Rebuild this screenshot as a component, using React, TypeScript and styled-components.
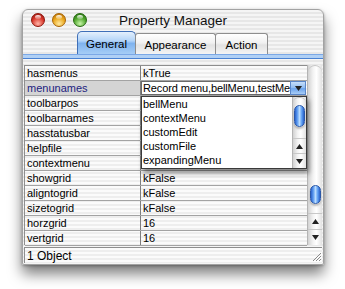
import styled, { createGlobalStyle } from 'styled-components';

const GlobalStyle = createGlobalStyle`
  body {
    margin: 0;
    background: #ffffff;
  }
`;

const pinstripe =
  'repeating-linear-gradient(to bottom, #f5f5f5 0px, #f5f5f5 2px, #e7e7e7 2px, #e7e7e7 4px)';
const lightStripe =
  'repeating-linear-gradient(to bottom, #fbfbfb 0px, #fbfbfb 2px, #eeeeee 2px, #eeeeee 4px)';

const rows = [
  { id: 1, name: 'hasmenus', value: 'kTrue' },
  { id: 2, name: 'menunames', value: '', popup: true },
  { id: 3, name: 'toolbarpos', value: '' },
  { id: 4, name: 'toolbarnames', value: '' },
  { id: 5, name: 'hasstatusbar', value: '' },
  { id: 6, name: 'helpfile', value: '' },
  { id: 7, name: 'contextmenu', value: '' },
  { id: 8, name: 'showgrid', value: 'kFalse' },
  { id: 9, name: 'aligntogrid', value: 'kFalse' },
  { id: 10, name: 'sizetogrid', value: 'kFalse' },
  { id: 11, name: 'horzgrid', value: '16' },
  { id: 12, name: 'vertgrid', value: '16' }
];

const menuItems = ['bellMenu', 'contextMenu', 'customEdit', 'customFile', 'expandingMenu'];

const tabs = [
  { id: 1, name: 'General', width: 59, active: true },
  { id: 2, name: 'Appearance', width: 81 },
  { id: 3, name: 'Action', width: 53 }
];

const lights = [
  { id: 1, base: '#d8362a', light: '#ffb3a6', dark: '#8e140b' },
  { id: 2, base: '#e9a51a', light: '#ffe9a0', dark: '#a86405' },
  { id: 3, base: '#4ea52c', light: '#c8f5a8', dark: '#24680f' }
];

const Arrow = ({ up }: { up?: boolean }) => (
  <svg width='7' height='5' viewBox='0 0 7 5'>
    <polygon points={up ? '3.5,0 7,5 0,5' : '0,0 7,0 3.5,5'} fill='#222' />
  </svg>
);

const Grip = () => (
  <svg width='12' height='12' viewBox='0 0 12 12'>
    <path d='M11 3 L3 11 M11 6 L6 11 M11 9 L9 11' stroke='#8a8a8a' strokeWidth='1' />
    <path d='M12 4 L4 12 M12 7 L7 12 M12 10 L10 12' stroke='#ffffff' strokeWidth='1' />
  </svg>
);

export default function App() {
  return (
    <Page>
      <GlobalStyle />
      <Window>
        <TitleBar>
          <Lights>
            {lights.map((l) => (
              <Light key={l.id} $base={l.base} $light={l.light} $dark={l.dark} />
            ))}
          </Lights>
          <Title>Property Manager</Title>
          <span />
        </TitleBar>
        <TabRow>
          {tabs.map((t) => (
            <Tab key={t.id} $active={t.active} $width={t.width}>
              {t.name}
            </Tab>
          ))}
        </TabRow>
        <Band />
        <Content>
          <Table>
            {rows.map((r) => (
              <Row key={r.id}>
                <NameCell $selected={r.popup}>{r.name}</NameCell>
                <ValueCell>
                  {r.popup ? (
                    <>
                      <Field>Record menu,bellMenu,testMe</Field>
                      <PopupButton>
                        <Arrow />
                      </PopupButton>
                      <MenuList>
                        <MenuItems>
                          {menuItems.map((m) => (
                            <MenuItem key={m}>{m}</MenuItem>
                          ))}
                        </MenuItems>
                        <ScrollBar $small>
                          <Track $small>
                            <Thumb $offset={7} $height={22} />
                          </Track>
                          <ArrowButton $small>
                            <Arrow up />
                          </ArrowButton>
                          <ArrowButton $small>
                            <Arrow />
                          </ArrowButton>
                        </ScrollBar>
                      </MenuList>
                    </>
                  ) : (
                    r.value
                  )}
                </ValueCell>
              </Row>
            ))}
          </Table>
          <ScrollBar>
            <Track>
              <Thumb $offset={119} $height={19} />
            </Track>
            <ArrowButton>
              <Arrow up />
            </ArrowButton>
            <ArrowButton>
              <Arrow />
            </ArrowButton>
          </ScrollBar>
        </Content>
        <StatusBar>
          <span>1 Object</span>
          <Grip />
        </StatusBar>
      </Window>
    </Page>
  );
}

const Page = styled.div`
  padding: 9px 0 0 22px;
  height: 289px;
  box-sizing: border-box;
`;

const Window = styled.div`
  width: 302px;
  height: 256px;
  box-sizing: border-box;
  display: flex;
  flex-direction: column;
  background: ${pinstripe};
  border: 1px solid #a2a2a2;
  border-radius: 6px 6px 2px 2px;
  box-shadow: 0 9px 14px rgba(0, 0, 0, 0.5), 0 1px 3px rgba(0, 0, 0, 0.3);
  font-family: 'Liberation Sans', Arial, sans-serif;
  color: #000;
`;

const TitleBar = styled.div`
  height: 21px;
  display: grid;
  grid-template-columns: 1fr auto 1fr;
  align-items: center;
  box-sizing: border-box;
`;

const Lights = styled.div`
  display: flex;
  gap: 7px;
  padding-left: 8px;
  padding-bottom: 1px;
`;

const Light = styled.div<{ $base: string; $light: string; $dark: string }>`
  position: relative;
  width: 14px;
  height: 14px;
  border-radius: 50%;
  box-sizing: border-box;
  border: 1px solid ${(p) => p.$dark};
  background: radial-gradient(circle at 50% 80%, ${(p) => p.$light} 0%, ${(p) => p.$base} 55%, ${(p) => p.$dark} 100%);

  &::after {
    content: '';
    position: absolute;
    left: 3px;
    top: 1px;
    width: 6px;
    height: 4px;
    border-radius: 50%;
    background: linear-gradient(to bottom, rgba(255, 255, 255, 0.95), rgba(255, 255, 255, 0.2));
  }
`;

const Title = styled.div`
  font-size: 13.5px;
  color: #111;
`;

const TabRow = styled.div`
  height: 23px;
  display: flex;
  align-items: flex-end;
  padding-left: 54px;
`;

const Tab = styled.div<{ $active?: boolean; $width: number }>`
  width: ${(p) => p.$width}px;
  height: ${(p) => (p.$active ? 23 : 21)}px;
  box-sizing: border-box;
  display: flex;
  align-items: center;
  justify-content: center;
  font-size: 11.5px;
  padding-top: 1px;
  border: 1px solid ${(p) => (p.$active ? '#3f6fb8' : '#8e8e8e')};
  border-bottom: none;
  border-radius: ${(p) => (p.$active ? '5px 5px 0 0' : '3px 3px 0 0')};
  margin-left: ${(p) => (p.$active ? 0 : -1)}px;
  background: ${(p) =>
    p.$active
      ? 'linear-gradient(to bottom, #e4f0fd 0%, #b3d4f8 40%, #7fb3ef 52%, #a6cdf6 100%)'
      : 'linear-gradient(to bottom, #ffffff 0%, #f1f1f1 45%, #e2e2e2 55%, #f4f4f4 100%)'};
`;

const Band = styled.div`
  height: 5px;
  box-sizing: border-box;
  border-top: 1px solid #7ba8e6;
  border-bottom: 1px solid #4a82d2;
  background: #b0d0f5;
`;

const Content = styled.div`
  display: flex;
  padding: 6px 1px 0 1px;
  height: 186px;
  box-sizing: border-box;
`;

const Table = styled.div`
  width: 283px;
  height: 180px;
  box-sizing: border-box;
  border-top: 1px solid #8e8e8e;
  border-left: 1px solid #8e8e8e;
  background: ${lightStripe};
  font-size: 11px;
`;

const Row = styled.div`
  display: grid;
  grid-template-columns: 116px 1fr;
  height: 15px;
  box-sizing: border-box;
  border-bottom: 1px solid #a3a3a3;
`;

const NameCell = styled.div<{ $selected?: boolean }>`
  padding-left: 2px;
  line-height: 14px;
  border-right: 1px solid #7e7e7e;
  background: ${(p) => (p.$selected ? '#d4d4d4' : 'transparent')};
  color: ${(p) => (p.$selected ? '#1d1d80' : '#000')};
  white-space: nowrap;
  overflow: hidden;
`;

const ValueCell = styled.div`
  position: relative;
  display: flex;
  padding-left: 2px;
  line-height: 14px;
  white-space: nowrap;
`;

const Field = styled.div`
  margin-left: -2px;
  width: 149px;
  height: 14px;
  box-sizing: border-box;
  padding-left: 1px;
  line-height: 13px;
  letter-spacing: -0.1px;
  background: #fff;
  border: 1px solid #6a6a6a;
  border-right: none;
  overflow: hidden;
`;

const PopupButton = styled.div`
  width: 16px;
  height: 14px;
  box-sizing: border-box;
  display: flex;
  align-items: center;
  justify-content: center;
  border: 1px solid #5a86c8;
  background: linear-gradient(to bottom, #c6def9 0%, #8ebbf1 50%, #6aa3ec 55%, #a9cdf6 100%);
`;

const MenuList = styled.div`
  position: absolute;
  left: 0;
  top: 15px;
  z-index: 2;
  width: 166px;
  height: 73px;
  box-sizing: border-box;
  display: flex;
  background: #fff;
  border: 1px solid #3a3a3a;
  box-shadow: 2px 4px 5px rgba(0, 0, 0, 0.45);
`;

const MenuItems = styled.div`
  flex: 1;
  overflow: hidden;
  padding-left: 1px;
`;

const MenuItem = styled.div`
  height: 14px;
  line-height: 14px;
  color: #000;
`;

const ScrollBar = styled.div<{ $small?: boolean }>`
  width: ${(p) => (p.$small ? 14 : 15)}px;
  height: ${(p) => (p.$small ? 71 : 180)}px;
  display: flex;
  flex-direction: column;
  box-sizing: border-box;
  border-left: 1px solid #b4b4b4;
  background: linear-gradient(to right, #d2d2d2 0%, #f2f2f2 35%, #ffffff 60%, #e2e2e2 100%);
`;

const Track = styled.div<{ $small?: boolean }>`
  flex: 1;
  display: flex;
  flex-direction: column;
  align-items: center;
  border-radius: ${(p) => (p.$small ? '6px 6px 0 0' : '7px 7px 0 0')};
  border-top: 1px solid #c4c4c4;
`;

const Thumb = styled.div<{ $offset: number; $height: number }>`
  margin-top: ${(p) => p.$offset}px;
  width: 11px;
  height: ${(p) => p.$height}px;
  box-sizing: border-box;
  border-radius: 6px;
  border: 1px solid #2b58a8;
  background: linear-gradient(to right, #2c63cc 0%, #5c9bf0 25%, #b9dcff 50%, #5d9ef2 75%, #2a60c8 100%);
  box-shadow: 0 2px 2px rgba(0, 0, 0, 0.25);
`;

const ArrowButton = styled.div<{ $small?: boolean }>`
  height: ${(p) => (p.$small ? 15 : 16)}px;
  display: flex;
  align-items: center;
  justify-content: center;
  border-top: 1px solid #c8c8c8;
  box-sizing: border-box;
`;

const StatusBar = styled.div`
  margin: 2px 1px 0 1px;
  height: 16px;
  box-sizing: border-box;
  display: flex;
  align-items: center;
  justify-content: space-between;
  padding-left: 2px;
  font-size: 12px;
  border-top: 1px solid #8e8e8e;
  border-left: 1px solid #8e8e8e;
  background: ${lightStripe};
`;
